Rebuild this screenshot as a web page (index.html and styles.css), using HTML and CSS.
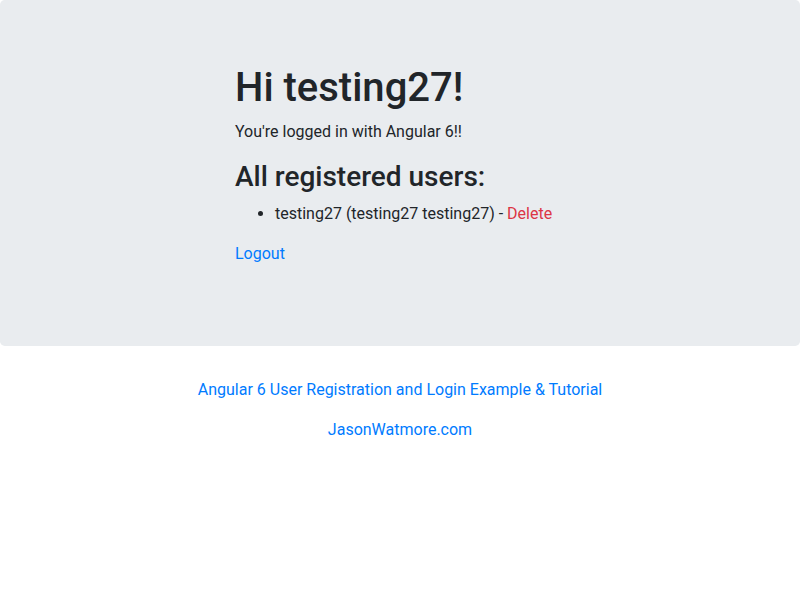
FILE: index.html
```html
<!DOCTYPE html>
<html>
<head>
<meta charset="utf-8">
<title>Angular 6 User Registration and Login Example</title>
<link rel="stylesheet" href="styles.css">
</head>
<body>
<div class="jumbotron">
  <div class="container">
    <div class="col">
      <h1 class="title">Hi testing27!</h1>
      <p class="para">You're logged in with Angular 6!!</p>
      <h3 class="subtitle">All registered users:</h3>
      <ul class="users">
        <li>testing27 (testing27 testing27) - <a class="danger" href="#">Delete</a></li>
      </ul>
      <p class="para"><a class="link" href="#">Logout</a></p>
    </div>
  </div>
</div>
<div class="credits">
  <p class="para"><a class="link" href="#">Angular 6 User Registration and Login Example &amp; Tutorial</a></p>
  <p class="para"><a class="link" href="#">JasonWatmore.com</a></p>
</div>
</body>
</html>
```
FILE: styles.css
```css
html, body {
  margin: 0;
  padding: 0;
}
body {
  font-family: Roboto, "Liberation Sans", sans-serif;
  font-size: 16px;
  line-height: 1.5;
  color: #212529;
  background: #fff;
}
.jumbotron {
  background: #e9ecef;
  padding: 64px 32px;
  margin-bottom: 32px;
  border-radius: 4.8px;
}
.container {
  width: 720px;
  margin: 0 auto;
  display: flex;
  justify-content: center;
  box-sizing: border-box;
}
.col {
  width: 360px;
  padding: 0 15px;
  box-sizing: border-box;
}
.title {
  font-size: 40px;
  font-weight: 500;
  line-height: 1.2;
  margin: 0 0 8px;
}
.subtitle {
  font-size: 28px;
  font-weight: 500;
  line-height: 1.2;
  margin: 0 0 8px;
}
.para {
  margin: 0 0 16px;
}
.users {
  margin: 0 0 16px;
  padding-left: 40px;
}
.link {
  color: #007bff;
  text-decoration: none;
}
.danger {
  color: #dc3545;
  text-decoration: none;
}
.credits {
  text-align: center;
}
```
